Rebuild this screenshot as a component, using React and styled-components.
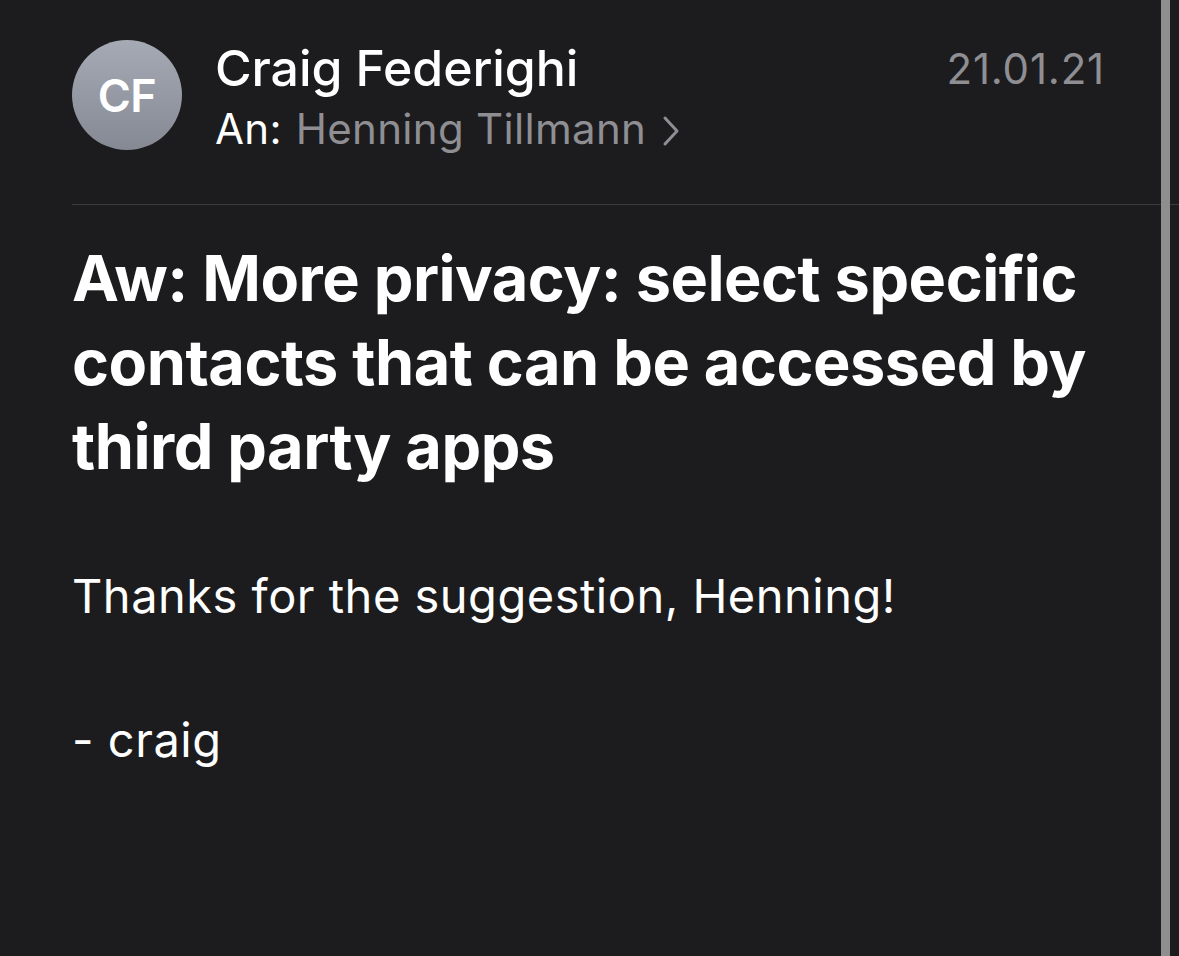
import React from 'react';
import styled, { createGlobalStyle } from 'styled-components';

const GlobalStyle = createGlobalStyle`
  html, body {
    margin: 0;
    padding: 0;
    background: #1c1c1e;
  }
  body {
    font-family: Inter, "Noto Sans", "Liberation Sans", sans-serif;
    color: #ffffff;
    -webkit-font-smoothing: antialiased;
  }
`;

const Screen = styled.div`
  position: relative;
  width: 1179px;
  height: 956px;
  overflow: hidden;
  background: #1c1c1e;
`;

const Header = styled.header`
  box-sizing: border-box;
  height: 205px;
  display: flex;
  align-items: flex-start;
  margin-left: 72px;
  padding: 40px 74px 0 0;
  border-bottom: 1px solid #3a3a3c;
`;

const Avatar = styled.div`
  flex: none;
  width: 110px;
  height: 110px;
  border-radius: 50%;
  background: linear-gradient(180deg, #a6aab4 0%, #858993 100%);
  display: flex;
  align-items: center;
  justify-content: center;
  font-size: 45px;
  font-weight: 600;
  letter-spacing: -0.5px;
  color: #ffffff;
`;

const Sender = styled.div`
  flex: 1;
  display: flex;
  flex-direction: column;
  margin-left: 33px;
  margin-top: -1px;
`;

const Name = styled.div`
  font-size: 50px;
  font-weight: 500;
  line-height: 58px;
  letter-spacing: -0.1px;
`;

const Recipient = styled.div`
  display: flex;
  align-items: center;
  margin-top: 3px;
  font-size: 42px;
  line-height: 58px;
  letter-spacing: 0.3px;
`;

const Muted = styled.span`
  color: #8e8e93;
  margin-left: 14px;
`;

const Chevron = styled.svg`
  margin-left: 16px;
  margin-top: 4px;
  width: 18px;
  height: 32px;
`;

const Date = styled.div`
  font-size: 42px;
  line-height: 54px;
  color: #8e8e93;
  letter-spacing: 0.8px;
  margin-top: 2px;
`;

const Content = styled.main`
  padding: 31px 60px 0 72px;
`;

const Subject = styled.h1`
  margin: 0;
  font-size: 63px;
  font-weight: 700;
  line-height: 84px;
  letter-spacing: -0.5px;
`;

const Body = styled.div`
  margin-top: 72px;
  font-size: 47px;
  line-height: 72px;
  letter-spacing: 0.5px;
`;

const Paragraph = styled.p`
  margin: 0 0 72px;
`;

const ScrollIndicator = styled.div`
  position: absolute;
  top: 0;
  bottom: 0;
  right: 9px;
  width: 9px;
  background: #8e8e8e;
`;

export default function App() {
  return (
    <>
      <GlobalStyle />
      <Screen>
        <Header>
          <Avatar>CF</Avatar>
          <Sender>
            <Name>Craig Federighi</Name>
            <Recipient>
              An:<Muted>Henning Tillmann</Muted>
              <Chevron viewBox="0 0 18 32" fill="none">
                <path d="M3 3 L15 16 L3 29" stroke="#8e8e93" strokeWidth="3" strokeLinecap="round" strokeLinejoin="round" />
              </Chevron>
            </Recipient>
          </Sender>
          <Date>21.01.21</Date>
        </Header>
        <Content>
          <Subject>Aw: More privacy: select specific contacts that can be accessed by third party apps</Subject>
          <Body>
            <Paragraph>Thanks for the suggestion, Henning!</Paragraph>
            <Paragraph>- craig</Paragraph>
          </Body>
        </Content>
        <ScrollIndicator />
      </Screen>
    </>
  );
}
